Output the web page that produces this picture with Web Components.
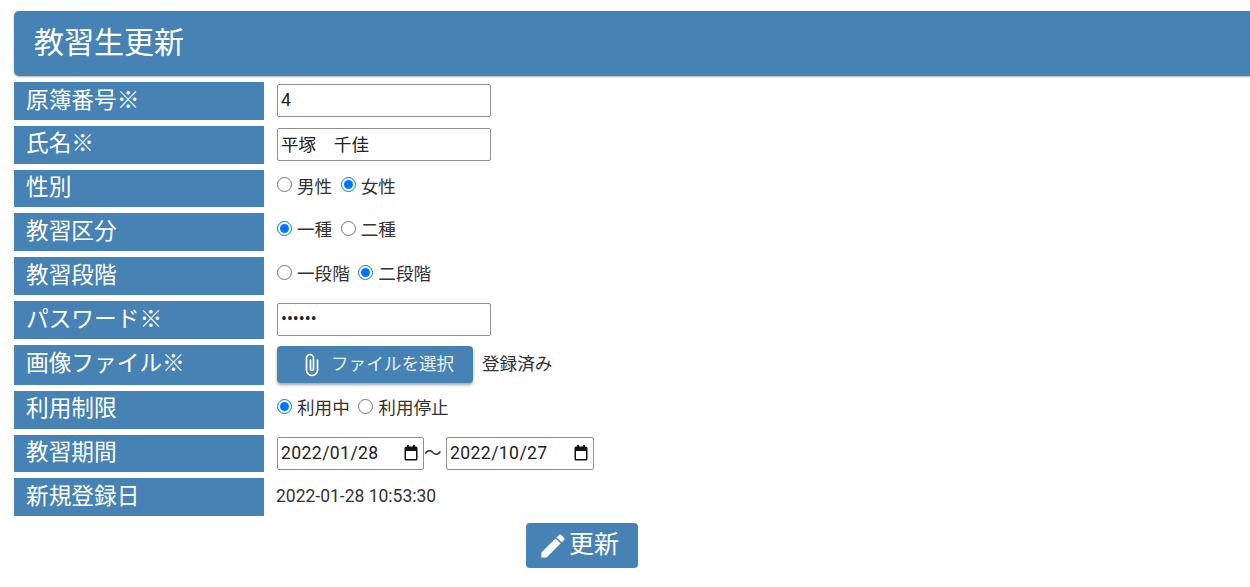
<!DOCTYPE html>
<html lang="ja">
<head>
<meta charset="utf-8">
<title>教習生更新</title>
<style>
    html, body { margin: 0; padding: 0; overflow: hidden; background: #fff; }
    body { font-family: Roboto, "Noto Sans CJK JP", sans-serif; color: #333; }
    .plain { font-size: 17.6px; line-height: 1; color: #333; }
</style>
</head>
<body>
<student-form>
    <page-title slot="title">教習生更新</page-title>

    <form-row label="原簿番号※"><text-field value="4"></text-field></form-row>
    <form-row label="氏名※"><text-field value="平塚　千佳"></text-field></form-row>
    <form-row label="性別"><radio-set name="gender" options="男性,女性" checked="1"></radio-set></form-row>
    <form-row label="教習区分"><radio-set name="kind" options="一種,二種" checked="0"></radio-set></form-row>
    <form-row label="教習段階"><radio-set name="stage" options="一段階,二段階" checked="1"></radio-set></form-row>
    <form-row label="パスワード※"><text-field type="password" value="secret"></text-field></form-row>
    <form-row label="画像ファイル※" tall><file-button>ファイルを選択</file-button><span class="plain" style="margin-left:9px">登録済み</span></form-row>
    <form-row label="利用制限"><radio-set name="status" options="利用中,利用停止" checked="0"></radio-set></form-row>
    <form-row label="教習期間"><date-range from="2022/01/28" to="2022/10/27"></date-range></form-row>
    <form-row label="新規登録日"><span class="plain" style="font-size:17.5px;margin-left:-1px;padding-bottom:1px">2022-01-28 10:53:30</span></form-row>

    <submit-button slot="actions">更新</submit-button>
</student-form>

<script>
class StudentForm extends HTMLElement {
    constructor() {
        super();
        this.attachShadow({ mode: "open" });
        this.shadowRoot.innerHTML = `
            <style>
                :host { display: block; padding: 11px 0 0 14px; }
                .rows { display: flex; flex-direction: column; gap: 6px; margin-top: 6px; }
                .actions { display: flex; margin: 7px 0 0 512px; }
            </style>
            <slot name="title"></slot>
            <div class="rows"><slot></slot></div>
            <div class="actions"><slot name="actions"></slot></div>
        `;
    }
}

class PageTitle extends HTMLElement {
    constructor() {
        super();
        this.attachShadow({ mode: "open" });
        this.shadowRoot.innerHTML = `
            <style>
                :host {
                    display: flex;
                    align-items: center;
                    height: 65px;
                    width: 1250px;
                    box-sizing: border-box;
                    padding: 0 0 1px 20px;
                    background: #4682b4;
                    color: #fff;
                    font-size: 30px;
                    line-height: 1;
                    border-radius: 5px;
                    box-shadow: 0 1px 2px rgba(0,0,0,.3);
                }
            </style>
            <slot></slot>
        `;
    }
}

class FormRow extends HTMLElement {
    constructor() {
        super();
        this.attachShadow({ mode: "open" });
        this.shadowRoot.innerHTML = `
            <style>
                :host { display: flex; align-items: center; height: 37.8px; }
                :host([tall]) { height: 40px; }
                .label {
                    align-self: stretch;
                    display: flex;
                    align-items: center;
                    box-sizing: border-box;
                    width: 250px;
                    padding: 0 0 0 12px;
                    background: #4682b4;
                    color: #fff;
                    font-size: 22.7px;
                    line-height: 1;
                    white-space: nowrap;
                }
                .value { display: flex; align-items: center; margin-left: 13px; }
            </style>
            <div class="label"></div>
            <div class="value"><slot></slot></div>
        `;
        this.shadowRoot.querySelector(".label").textContent = this.getAttribute("label");
    }
}

class TextField extends HTMLElement {
    constructor() {
        super();
        this.attachShadow({ mode: "open" });
        this.shadowRoot.innerHTML = `
            <style>
                :host { display: block; }
                input {
                    display: block;
                    box-sizing: border-box;
                    width: 214px;
                    height: 33px;
                    padding: 0 3px 2px;
                    margin: 0;
                    border: 1px solid #8f8f8f;
                    border-radius: 2px;
                    font: 17.6px Roboto, "Noto Sans CJK JP", sans-serif;
                    color: #222;
                    outline: none;
                }
            </style>
            <input>
        `;
        const input = this.shadowRoot.querySelector("input");
        input.type = this.getAttribute("type") || "text";
        input.value = this.getAttribute("value") || "";
    }
}

class RadioSet extends HTMLElement {
    constructor() {
        super();
        this.attachShadow({ mode: "open" });
        const name = this.getAttribute("name");
        const checked = Number(this.getAttribute("checked"));
        const options = this.getAttribute("options").split(",");
        this.shadowRoot.innerHTML = `
            <style>
                :host { display: flex; font-size: 17.6px; line-height: 1; color: #333; padding-bottom: 2px; }
                label { display: inline-flex; align-items: center; margin-right: 8.5px; }
                input { width: 15px; height: 15px; margin: 0 5px 5px 0; }
            </style>
            ${options.map((text, i) => `
                <label><input type="radio" name="${name}" ${i === checked ? "checked" : ""}>${text}</label>
            `).join("")}
        `;
    }
}

class FileButton extends HTMLElement {
    constructor() {
        super();
        this.attachShadow({ mode: "open" });
        this.shadowRoot.innerHTML = `
            <style>
                :host {
                    display: flex;
                    align-items: center;
                    box-sizing: border-box;
                    width: 196px;
                    height: 37px;
                    padding-left: 27.5px;
                    background: #4682b4;
                    color: #e8f0f6;
                    font-size: 17.6px;
                    line-height: 1;
                    border-radius: 4px;
                    box-shadow: 0 2px 3px rgba(0,0,0,.35);
                }
                svg { width: 14px; height: 24px; margin-right: 12.5px; flex: none; }
            </style>
            <svg viewBox="0 0 14 24" fill="none" stroke="#fff" stroke-width="1.7" stroke-linecap="round">
                <path d="M12.5 7V17a5.5 5.5 0 0 1-11 0V5a3.5 3.5 0 0 1 7 0V16a1.5 1.5 0 0 1-3 0V7"/>
            </svg>
            <span><slot></slot></span>
        `;
    }
}

class DateField extends HTMLElement {
    constructor() {
        super();
        this.attachShadow({ mode: "open" });
        this.shadowRoot.innerHTML = `
            <style>
                :host {
                    display: flex;
                    align-items: center;
                    justify-content: space-between;
                    box-sizing: border-box;
                    width: 147px;
                    height: 33px;
                    padding: 0 4px 0 3px;
                    border: 1px solid #8f8f8f;
                    border-radius: 2px;
                    font-size: 17.6px;
                    line-height: 1;
                    letter-spacing: .4px;
                    color: #222;
                }
                svg { width: 16px; height: 16px; flex: none; }
            </style>
            <span></span>
            <svg viewBox="0 0 16 16">
                <path fill="#111" fill-rule="evenodd" d="M4 0h2v1.500h4V0h2v1.500h1A1.500 1.500 0 0 1 14.500 3v11a1.500 1.500 0 0 1-1.500 1.500H3A1.500 1.500 0 0 1 1.500 14V3A1.500 1.500 0 0 1 3 1.500h1V0zM3 6v8h10V6H3z"/>
            </svg>
        `;
        this.shadowRoot.querySelector("span").textContent = this.getAttribute("value");
    }
}

class DateRange extends HTMLElement {
    constructor() {
        super();
        this.attachShadow({ mode: "open" });
        this.shadowRoot.innerHTML = `
            <style>
                :host { display: flex; align-items: center; font-size: 17.6px; line-height: 1; color: #333; }
                span { width: 22px; text-align: left; }
                date-field + span + date-field { width: 148px; }
            </style>
            <date-field value="${this.getAttribute("from")}"></date-field><span>～</span><date-field value="${this.getAttribute("to")}"></date-field>
        `;
    }
}

class SubmitButton extends HTMLElement {
    constructor() {
        super();
        this.attachShadow({ mode: "open" });
        this.shadowRoot.innerHTML = `
            <style>
                :host {
                    display: flex;
                    align-items: center;
                    box-sizing: border-box;
                    width: 112px;
                    height: 45px;
                    padding-left: 12px;
                    background: #4682b4;
                    color: #fff;
                    font-size: 25px;
                    line-height: 1;
                    border-radius: 4px;
                }
                svg { width: 30px; height: 30px; flex: none; margin-right: 1px; }
                span { padding-bottom: 2px; }
            </style>
            <svg viewBox="0 0 24 24" fill="#fff" stroke="#fff" stroke-width=".5" stroke-linejoin="round">
                <path d="M3 17.250V21h3.750L17.810 9.940l-3.750-3.750L3 17.250zM20.710 7.040a1 1 0 0 0 0-1.410l-2.340-2.340a1 1 0 0 0-1.410 0l-1.830 1.830 3.750 3.750 1.830-1.830z"/>
            </svg>
            <span><slot></slot></span>
        `;
    }
}

customElements.define("student-form", StudentForm);
customElements.define("page-title", PageTitle);
customElements.define("form-row", FormRow);
customElements.define("text-field", TextField);
customElements.define("radio-set", RadioSet);
customElements.define("file-button", FileButton);
customElements.define("date-field", DateField);
customElements.define("date-range", DateRange);
customElements.define("submit-button", SubmitButton);
</script>
</body>
</html>
